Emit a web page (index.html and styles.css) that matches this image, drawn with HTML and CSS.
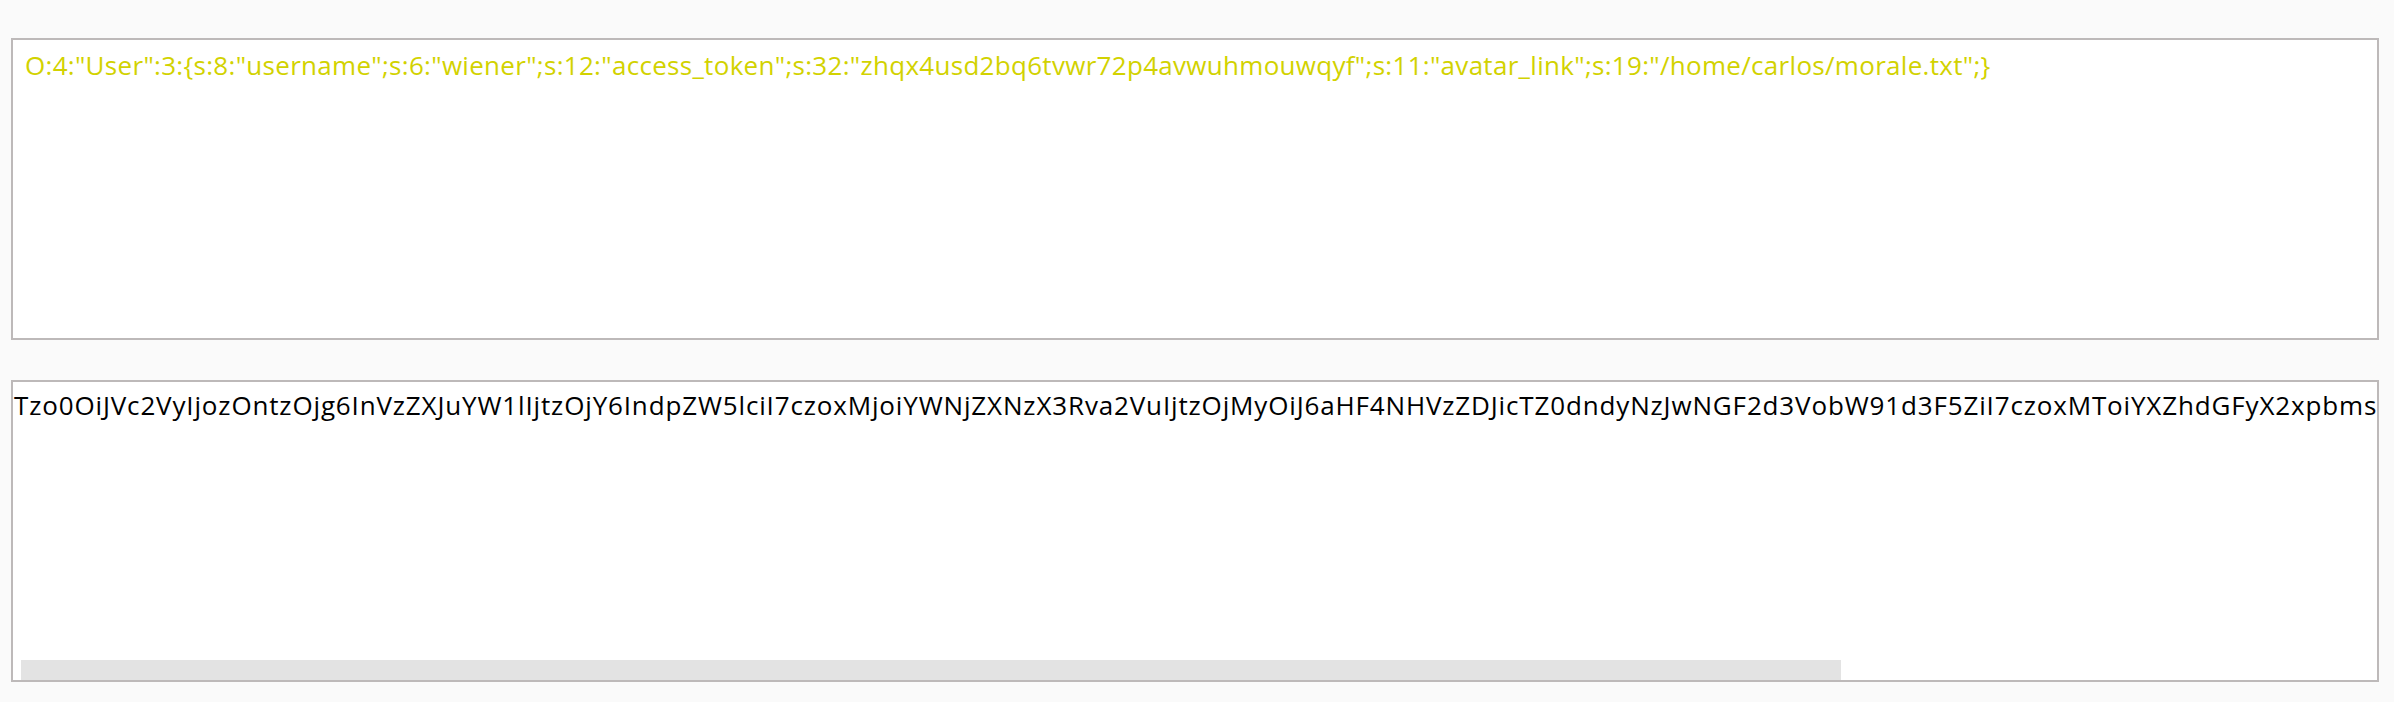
FILE: index.html
```html
<!DOCTYPE html>
<html lang="en">

<head>
    <meta charset="UTF-8">
    <meta name="viewport" content="width=device-width, initial-scale=1.0">
    <title>Serialize</title>
    <link rel="stylesheet" href="styles.css">
</head>

<body>
    <div class="panes">
        <div class="pane pane-raw">
            <div class="pane-text">O:4:"User":3:{s:8:"username";s:6:"wiener";s:12:"access_token";s:32:"zhqx4usd2bq6tvwr72p4avwuhmouwqyf";s:11:"avatar_link";s:19:"/home/carlos/morale.txt";}</div>
        </div>
        <div class="pane pane-encoded">
            <div class="pane-text">Tzo0OiJVc2VyIjozOntzOjg6InVzZXJuYW1lIjtzOjY6IndpZW5lciI7czoxMjoiYWNjZXNzX3Rva2VuIjtzOjMyOiJ6aHF4NHVzZDJicTZ0dndyNzJwNGF2d3VobW91d3F5ZiI7czoxMToiYXZhdGFyX2xpbmsiO3M6MTk6Ii9ob21lL2Nhcmxvcy9tb3JhbGUudHh0Ijt9</div>
            <div class="hscroll">
                <div class="hscroll-thumb" style="width: 77.5%;"></div>
            </div>
        </div>
    </div>
</body>

</html>
```

FILE: styles.css
```css
body {
    margin: 38px 15px 0 11px;
    background-color: #fafafa;
    font-family: "Open Sans", "Noto Sans", sans-serif;
}
.panes {
    display: flex;
    flex-direction: column;
    gap: 40px;
}
.pane {
    box-sizing: border-box;
    height: 302px;
    background: #fff;
    border: 2px solid #bdb9b9;
    display: flex;
    flex-direction: column;
    overflow: hidden;
}
.pane-text {
    font-size: 26px;
    line-height: 35px;
    white-space: nowrap;
    overflow: hidden;
    flex: 1;
}
.pane-raw .pane-text {
    color: #d2d200;
    padding: 8px 12px;
    letter-spacing: 0.3px;
}
.pane-encoded .pane-text {
    color: #000;
    padding: 6px 1px;
    letter-spacing: 0.85px;
}
.hscroll {
    height: 20px;
    padding: 0 8px;
}
.hscroll-thumb {
    height: 100%;
    background: #e3e3e3;
}
```
